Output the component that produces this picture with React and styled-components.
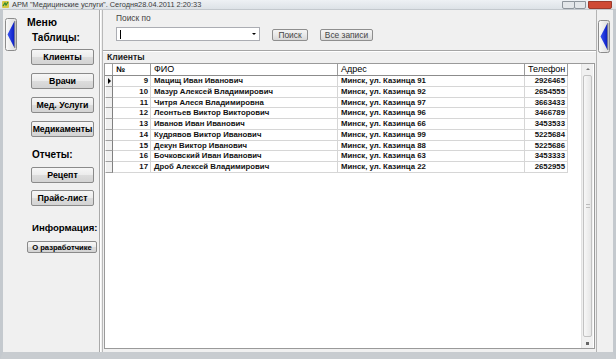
import React from 'react';
import styled, { createGlobalStyle } from 'styled-components';

const Global = createGlobalStyle`
  html, body { margin: 0; padding: 0; background: #ffffff; }
  body { font-family: "Liberation Sans", Arial, sans-serif; color: #000; }
  * { box-sizing: border-box; }
`;

const Window = styled.div`
  width: 616px;
  height: 359px;
  display: flex;
  flex-direction: column;
  background: #dfe3e7;
  overflow: hidden;
`;

const TitleBar = styled.div`
  height: 10px;
  display: flex;
  align-items: center;
  padding-left: 2px;
  background: linear-gradient(#eef1f4, #dde2e7);
  border-bottom: 1px solid #c3c8cd;
`;

const TitleText = styled.span`
  margin-left: 3px;
  font-size: 7.4px;
  line-height: 9px;
  color: #3a3a3a;
  white-space: nowrap;
  flex: 1;
`;

const Controls = styled.div`
  display: flex;
  align-items: flex-start;
  align-self: flex-start;
  margin-top: 1px;
  margin-right: 4px;
`;

const Ctl = styled.div`
  width: ${p => p.$w}px;
  height: 8px;
  border: 1px solid ${p => (p.$close ? '#9b3a2c' : '#8e959c')};
  border-radius: 0 0 2px 2px;
  background: ${p => (p.$close ? '#cf4a35' : '#e3e6e9')};
  margin-left: ${p => (p.$close ? 2 : -1)}px;
`;

const Body = styled.div`
  flex: 1;
  display: flex;
  border-left: 3px solid #c4c9ce;
  border-right: 3px solid #c4c9ce;
  border-bottom: 7px solid #c8ccd0;
  min-height: 0;
`;

const LeftPanel = styled.div`
  width: 97px;
  display: flex;
  align-items: flex-start;
  background: #f0f0f0;
  border-right: 1px solid #a9a9a9;
  padding-left: 2px;
`;

const Splitter = styled.div`
  width: 3px;
  background: #f0f0f0;
  border-left: 1px solid #ffffff;
  border-right: 1px solid #b9b9b9;
`;

const ArrowWrap = styled.div`
  margin-top: ${p => p.$top}px;
  margin-left: ${p => p.$left || 0}px;
  width: 12px;
  height: 33px;
  flex-shrink: 0;
`;

const MenuCol = styled.div`
  display: flex;
  flex-direction: column;
  align-items: flex-start;
  margin-left: 10px;
  padding-top: 6px;
`;

const Heading = styled.div`
  margin-top: ${p => p.$top}px;
  margin-left: ${p => p.$indent}px;
  font-size: ${p => p.$size}px;
  line-height: 12px;
  font-weight: bold;
  white-space: nowrap;
`;

const MenuButton = styled.button`
  margin-top: ${p => p.$top}px;
  margin-left: ${p => p.$indent}px;
  width: ${p => p.$w}px;
  height: ${p => p.$h}px;
  padding: 0;
  display: flex;
  align-items: center;
  justify-content: center;
  border: 1px solid #8a8a8a;
  border-radius: 2px;
  background: linear-gradient(#f6f6f6 0%, #ececec 48%, #dcdcdc 52%, #d3d3d3 100%);
  font-family: "Liberation Sans", Arial, sans-serif;
  font-size: ${p => p.$fs}px;
  font-weight: bold;
  color: #000;
  white-space: nowrap;
  overflow: visible;
`;

const Main = styled.div`
  width: 493px;
  display: flex;
  flex-direction: column;
  background: #f0f0f0;
`;

const SearchPanel = styled.div`
  height: 40px;
  padding: 4px 0 0 13px;
  display: flex;
  flex-direction: column;
`;

const SearchLabel = styled.div`
  font-size: 8.4px;
  line-height: 9px;
  color: #444;
`;

const SearchRow = styled.div`
  margin-top: 4px;
  display: flex;
  align-items: center;
`;

const Combo = styled.div`
  width: 144px;
  height: 14px;
  background: #fff;
  border: 1px solid #abadb3;
  display: flex;
  align-items: center;
  justify-content: space-between;
  padding: 0 3px 0 3px;
`;

const Caret = styled.div`
  width: 1px;
  height: 9px;
  background: #000;
`;

const DropTri = styled.div`
  width: 0;
  height: 0;
  border-left: 2px solid transparent;
  border-right: 2px solid transparent;
  border-top: 2px solid #000;
`;

const SmallButton = styled.button`
  margin-left: ${p => p.$left}px;
  margin-top: 2px;
  width: ${p => p.$w}px;
  height: 12px;
  padding: 0;
  border: 1px solid #8e8e8e;
  border-radius: 2px;
  background: linear-gradient(#f4f4f4 0%, #e8e8e8 50%, #d8d8d8 100%);
  font-family: "Liberation Sans", Arial, sans-serif;
  font-size: 8.4px;
  color: #444;
  white-space: nowrap;
`;

const HSep = styled.div`
  height: 2px;
  border-top: 1px solid #a5a5a5;
  border-bottom: 1px solid #ffffff;
`;

const GridSection = styled.div`
  flex: 1;
  display: flex;
  flex-direction: column;
  min-height: 0;
  padding: 0 1px 3px 1px;
`;

const GridTitle = styled.div`
  height: 11px;
  padding-left: 3px;
  font-size: 8.6px;
  line-height: 11px;
  font-weight: bold;
  color: #222;
`;

const GridBox = styled.div`
  flex: 1;
  display: flex;
  background: #fff;
  border: 1px solid #9a9a9a;
  min-height: 0;
`;

const TableArea = styled.div`
  flex: 1;
  display: flex;
  flex-direction: column;
`;

const cols = '8px 38px 187px 187px 43px';

const HeaderRow = styled.div`
  display: grid;
  grid-template-columns: ${cols};
  height: 12px;
  border-bottom: 1px solid #8c8c8c;
  width: 463px;
`;

const HeadCell = styled.div`
  border-right: 1px solid #9c9c9c;
  border-left: 1px solid #ffffff;
  font-size: ${p => (p.$bold ? 8 : 9)}px;
  font-weight: ${p => (p.$bold ? 'bold' : 'normal')};
  line-height: 11px;
  padding-left: 2px;
  white-space: nowrap;
  overflow: hidden;
  background: #fff;
`;

const Row = styled.div`
  display: grid;
  grid-template-columns: ${cols};
  height: 10.75px;
  width: 463px;
`;

const Indicator = styled.div`
  background: #f0f0f0;
  border-right: 1px solid #808080;
  border-bottom: 1px solid #a0a0a0;
  border-left: 1px solid #ffffff;
  display: flex;
  align-items: center;
  justify-content: center;
`;

const Pointer = styled.div`
  width: 0;
  height: 0;
  border-top: 3px solid transparent;
  border-bottom: 3px solid transparent;
  border-left: 3px solid #000;
`;

const Cell = styled.div`
  border-right: 1px solid #d6d6d6;
  border-bottom: 1px solid #d6d6d6;
  font-size: 7.8px;
  font-weight: bold;
  line-height: 10px;
  text-align: ${p => (p.$right ? 'right' : 'left')};
  padding: ${p => (p.$right ? '0 2px 0 0' : '0 0 0 3px')};
  white-space: nowrap;
  overflow: hidden;
  color: #111;
`;

const ScrollBar = styled.div`
  width: 12px;
  margin-right: 1px;
  display: flex;
  flex-direction: column;
  background: #f0f0f0;
  border-left: 1px solid #e3e3e3;
`;

const ScrollBtn = styled.div`
  height: 10px;
  display: flex;
  align-items: center;
  justify-content: center;
`;

const TriUp = styled.div`
  width: 0;
  height: 0;
  border-left: 2px solid transparent;
  border-right: 2px solid transparent;
  border-bottom: 2px solid #777;
`;

const TriDown = styled.div`
  width: 3px;
  height: 3px;
  background: #666;
`;

const Thumb = styled.div`
  flex: 1;
  margin: 1px 1px;
  border: 1px solid #c2c2c2;
  border-radius: 2px;
  background: linear-gradient(90deg, #f7f7f7, #e6e6e6);
  display: flex;
  align-items: center;
  justify-content: center;
`;

const Grip = styled.div`
  width: 4px;
  height: 4px;
  border-top: 1px solid #bcbcbc;
  border-bottom: 1px solid #bcbcbc;
`;

const RightStrip = styled.div`
  width: 17px;
  background: #f0f0f0;
  border-left: 1px solid #b4b4b4;
  display: flex;
  align-items: flex-start;
`;

const ArrowButton = () => (
  <svg width="12" height="33" viewBox="0 0 12 33">
    <defs>
      <linearGradient id="abg" x1="0" y1="0" x2="1" y2="0">
        <stop offset="0" stopColor="#fbfbfb" />
        <stop offset="1" stopColor="#d9d9d9" />
      </linearGradient>
      <linearGradient id="ablue" x1="0" y1="0" x2="1" y2="0">
        <stop offset="0" stopColor="#3a54f0" />
        <stop offset="1" stopColor="#0a1cc4" />
      </linearGradient>
    </defs>
    <rect x="0.5" y="0.5" width="11" height="32" rx="2" fill="url(#abg)" stroke="#8c8c8c" />
    <polygon points="2.5,16.5 9.5,3 9.5,30" fill="url(#ablue)" />
    <line x1="9.8" y1="3" x2="9.8" y2="30" stroke="#6a6a6a" strokeWidth="0.8" />
  </svg>
);

const AppIcon = () => (
  <svg width="7" height="7" viewBox="0 0 7 7">
    <rect x="0" y="0" width="7" height="7" rx="1" fill="#d8c848" />
    <path d="M1 5 L3 2 L4 4 L6 1" stroke="#2f8a2f" strokeWidth="1.2" fill="none" />
  </svg>
);

const rows = [
  [9, 'Мацищ Иван Иванович', 'Минск, ул. Казинца 91', '2926465'],
  [10, 'Мазур Алексей Владимирович', 'Минск, ул. Казинца 92', '2654555'],
  [11, 'Читря Алеся Владимировна', 'Минск, ул. Казинца 97', '3663433'],
  [12, 'Леонтьев Виктор Викторович', 'Минск, ул. Казинца 96', '3466789'],
  [13, 'Иванов Иван Иванович', 'Минск, ул. Казинца 66', '3453533'],
  [14, 'Кудрявов Виктор Иванович', 'Минск, ул. Казинца 99', '5225684'],
  [15, 'Декун Виктор Иванович', 'Минск, ул. Казинца 88', '5225686'],
  [16, 'Бочковский Иван Иванович', 'Минск, ул. Казинца 63', '3453333'],
  [17, 'Дроб Алексей Владимирович', 'Минск, ул. Казинца 22', '2652955'],
];

export default function App() {
  return (
    <>
      <Global />
      <Window>
        <TitleBar>
          <AppIcon />
          <TitleText>АРМ "Медицинские услуги". Сегодня28.04.2011 2:20:33</TitleText>
          <Controls>
            <Ctl $w={13} />
            <Ctl $w={12} />
            <Ctl $w={24} $close />
          </Controls>
        </TitleBar>
        <Body>
          <LeftPanel>
            <ArrowWrap $top={8}>
              <ArrowButton />
            </ArrowWrap>
            <MenuCol>
              <Heading $top={0} $indent={0} $size={10.5}>Меню</Heading>
              <Heading $top={4} $indent={5} $size={10}>Таблицы:</Heading>
              <MenuButton $top={5} $indent={4} $w={63} $h={16} $fs={8.8}>Клиенты</MenuButton>
              <MenuButton $top={8} $indent={4} $w={63} $h={16} $fs={8.8}>Врачи</MenuButton>
              <MenuButton $top={8} $indent={4} $w={63} $h={16} $fs={8.8}>Мед. Услуги</MenuButton>
              <MenuButton $top={8} $indent={4} $w={63} $h={16} $fs={8.6}>Медикаменты</MenuButton>
              <Heading $top={12} $indent={5} $size={10}>Отчеты:</Heading>
              <MenuButton $top={6} $indent={4} $w={63} $h={16} $fs={8.8}>Рецепт</MenuButton>
              <MenuButton $top={7} $indent={4} $w={63} $h={16} $fs={8.8}>Прайс-лист</MenuButton>
              <Heading $top={16} $indent={5} $size={9.6}>Информация:</Heading>
              <MenuButton $top={7} $indent={0} $w={70} $h={12} $fs={7.6}>О разработчике</MenuButton>
            </MenuCol>
          </LeftPanel>
          <Splitter />
          <Main>
            <SearchPanel>
              <SearchLabel>Поиск по</SearchLabel>
              <SearchRow>
                <Combo>
                  <Caret />
                  <DropTri />
                </Combo>
                <SmallButton $left={12} $w={36}>Поиск</SmallButton>
                <SmallButton $left={12} $w={53}>Все записи</SmallButton>
              </SearchRow>
            </SearchPanel>
            <HSep />
            <GridSection>
              <GridTitle>Клиенты</GridTitle>
              <GridBox>
                <TableArea>
                  <HeaderRow>
                    <HeadCell />
                    <HeadCell $bold>№</HeadCell>
                    <HeadCell>ФИО</HeadCell>
                    <HeadCell>Адрес</HeadCell>
                    <HeadCell>Телефон</HeadCell>
                  </HeaderRow>
                  {rows.map((r, i) => (
                    <Row key={r[0]}>
                      <Indicator>{i === 0 && <Pointer />}</Indicator>
                      <Cell $right>{r[0]}</Cell>
                      <Cell>{r[1]}</Cell>
                      <Cell>{r[2]}</Cell>
                      <Cell $right>{r[3]}</Cell>
                    </Row>
                  ))}
                </TableArea>
                <ScrollBar>
                  <ScrollBtn><TriUp /></ScrollBtn>
                  <Thumb><Grip /></Thumb>
                  <ScrollBtn><TriDown /></ScrollBtn>
                </ScrollBar>
              </GridBox>
            </GridSection>
          </Main>
          <RightStrip>
            <ArrowWrap $top={10} $left={1}>
              <ArrowButton />
            </ArrowWrap>
          </RightStrip>
        </Body>
      </Window>
    </>
  );
}
